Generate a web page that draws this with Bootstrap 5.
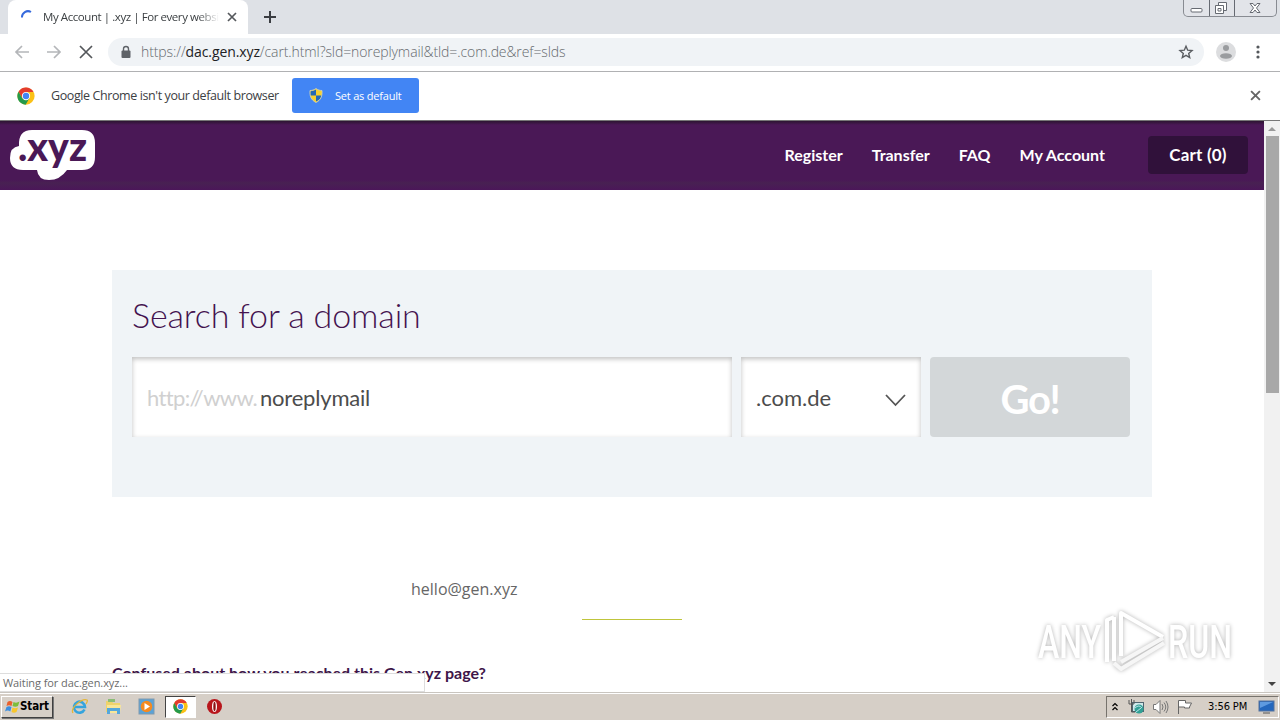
<!DOCTYPE html>
<html lang="en">
<head>
    <meta charset="UTF-8">
    <meta name="viewport" content="width=device-width, initial-scale=1.0">
    <title>My Account | .xyz | For every website</title>
    <link href="https://cdn.jsdelivr.net/npm/bootstrap@5.3.0/dist/css/bootstrap.min.css" rel="stylesheet">

    <style>
        body { width: 1280px; height: 720px; font-family: "Open Sans", sans-serif; font-size: 12px; line-height: 1; color: #3c4043; background: #fff; }
        svg { display: block; flex: none; }
        span, a { white-space: nowrap; }

        /* browser window */
        .tabstrip { height: 34px; background: #dee1e6; }
        .tab-active { width: 240px; height: 34px; margin-left: 8px; padding: 0 10px 0 12px; background: #fff; border-radius: 8px 8px 0 0; }
        .tab-title { width: 176px; margin-left: 8px; line-height: 18px; font-size: 11.5px; letter-spacing: -.43px; -webkit-mask-image: linear-gradient(90deg, #000 88%, transparent); }
        .winbtns { width: 94px; height: 17px; margin-right: 3px; border: 1px solid #888b92; border-top: 0; border-radius: 0 0 5px 5px; background: #e2e4e9; }
        .toolbar { height: 38px; padding-bottom: 1px; border-bottom: 1px solid #b0b1b3; }
        .omnibox { width: 1096px; height: 28px; margin-left: 14px; padding: 0 10px 0 12px; background: #f0f3f6; }
        .url { margin-left: 9px; font-size: 14px; font-weight: 300; color: #666a6e; line-height: 20px; letter-spacing: -.1px; }
        .url b { font-weight: 400; color: #202124; }
        .infobar { height: 49px; padding-bottom: 1px; border-bottom: 1px solid #777; }
        .infobar-text { width: 241px; margin-left: 17px; font-size: 12.5px; line-height: 20px; letter-spacing: -.4px; }
        .btn-default-browser { width: 127px; height: 35px; padding: 0 0 0 17px; background: #4285f4; border-radius: 3px; color: #fff; font-size: 11px; line-height: 1; letter-spacing: -.2px; }

        /* page */
        .viewport { height: 571px; }
        .site { width: 1264px; overflow: hidden; font-family: Lato, sans-serif; }
        .site-nav { height: 69px; padding: 0 16px 2px 10px; background: linear-gradient(#2c1531, #4a1856 4px, #4a1856 59px, #482152 62px, #4b1659); }
        .site-nav a { color: #fff; text-decoration: none; font-size: 16px; font-weight: 700; line-height: 20px; }
        .site-nav .cart-btn { width: 100px; height: 38px; margin-left: 43px; background: #30113a; border-radius: 4px; font-size: 17px; letter-spacing: .2px; }
        .search-panel { width: 1040px; height: 227px; margin: 80px 0 0 112px; padding: 23px 20px 0; background: #f0f4f7; }
        .search-title { height: 44px; margin: 0 0 20px; font-size: 34px; font-weight: 300; line-height: 44px; letter-spacing: -.13px; color: #44134f; }
        .field { height: 80px; padding: 2px 15px 0; background: #fff; box-shadow: inset 0 2px 5px rgba(0,0,0,.25); font-size: 22px; line-height: 30px; color: #4c4c4c; }
        .field-name { width: 600px; }
        .field-tld { width: 180px; }
        .http { width: 113px; letter-spacing: -.65px; color: #d0d0d0; }
        .domain-name { letter-spacing: -.2px; }
        .btn-go { width: 200px; height: 80px; background: #d3d7d9; color: #fff; border-radius: 4px; font-size: 40px; font-weight: 700; line-height: 1; letter-spacing: -1.4px; }
        .mail { margin: 81px 0 0 411px; font-family: "Open Sans", sans-serif; font-size: 16px; line-height: 22px; color: #666; }
        .rule { width: 100px; height: 1px; margin: 19px 0 0 582px; background: #bfc53c; }
        .question { margin: 41px 0 0 112px; font-size: 16px; font-weight: 700; line-height: 24px; color: #3e1549; }
        .scroll-y { width: 16px; background: #f1f1f1; }
        .scroll-thumb { width: 13px; height: 257px; background: #a8a8a8; }
        .status { left: 0; top: 673px; width: 425px; height: 19px; padding: 0 3px; background: #fff; border: 1px solid #ddd; border-left: 0; font-size: 11px; line-height: 18px; letter-spacing: -.08px; color: #6b6b6b; }
        .watermark { left: 1030px; top: 600px; filter: drop-shadow(0 0 2px rgba(0,0,0,.3)); }

        /* taskbar */
        .taskbar { height: 28px; background: #d6cfc7; border-top: 1px solid #c9c5bf; box-shadow: inset 0 1px #fff; font-family: "DejaVu Sans Condensed", "DejaVu Sans", sans-serif; color: #000; }
        .start-btn { width: 52px; height: 22px; margin-left: 1px; padding-left: 2px; border: 1px solid; border-color: #fff #404040 #404040 #fff; box-shadow: 1px 1px #777; font-weight: 700; font-size: 11.5px; letter-spacing: -.1px; }
        .task-open { width: 31px; height: 22px; background: #fff; border: 1px solid; border-color: #444 #fff #fff #444; }
        .tray { width: 173px; height: 22px; margin-right: 1px; border: 1px solid; border-color: #77736d #fff #fff #77736d; font-size: 11px; padding-left: 4px; }
        .clock { width: 41px; letter-spacing: -.1px; }
    </style>
</head>
<body class="overflow-hidden position-relative">

<svg width="0" height="0" class="position-absolute">
    <symbol id="chrome" viewBox="0 0 48 48">
        <circle cx="24" cy="24" r="23" fill="#fbc116"/>
        <path d="M4 12.5A23 23 0 0 1 44 13H24L14 30z" fill="#e33b2e"/>
        <path d="M4 12.5A23 23 0 0 0 23 47L33 30 24 35 14 30z" fill="#249a4b"/>
        <circle cx="24" cy="24" r="11" fill="#fff"/><circle cx="24" cy="24" r="8.5" fill="#4285f4"/>
    </symbol>
    <symbol id="cross" viewBox="0 0 10 10"><path d="M1 1l8 8M9 1L1 9" stroke="currentColor" stroke-width="1.7" fill="none"/></symbol>
</svg>

<div class="tabstrip d-flex">
    <div class="tab-active d-flex align-items-center">
        <svg width="15" height="15" viewBox="0 0 15 15"><path d="M2 7.500a6 6 0 0 1 9-5.500" stroke="#3569dc" stroke-width="2" fill="none"/></svg>
        <span class="tab-title">My Account | .xyz | For every websi</span>
        <svg class="ms-2" width="10" height="10" style="color:#55585c"><use href="#cross"/></svg>
    </div>
    <svg class="mt-2 ms-3" width="14" height="16" viewBox="0 0 14 16"><path d="M0 9h12M6 3v12" stroke="#3a3d42" stroke-width="2"/></svg>
    <div class="winbtns ms-auto">
        <svg width="92" height="16" viewBox="0 0 92 16" fill="none" stroke="#666a72">
            <path d="M25.500 0v16M50.500 0v16"/>
            <rect x="7" y="8.500" width="11" height="3.500" rx="1" fill="#fff"/>
            <path d="M34.500 5V2.500h8v8H40M31.500 5.500h8v8h-8zM34 8.500h3v2.500h-3z" fill="#fff"/>
            <path d="M66 3.500h3l2 2.500 2-2.500h3l-3.500 4.500 3.500 4.500h-3l-2-2.500-2 2.500h-3L69.500 8z" fill="#fff"/>
        </svg>
    </div>
</div>

<div class="toolbar d-flex align-items-center">
    <svg width="80" height="16" viewBox="0 0 80 16" fill="none" stroke="#b4b6b9" stroke-width="1.700" style="margin-left:14px">
        <path d="M15 8H2M8 2L2 8l6 6M33 8h13M40 2l6 6-6 6"/><path d="M66 2l12 12M78 2L66 14" stroke="#54575b"/>
    </svg>
    <div class="omnibox d-flex align-items-center rounded-pill">
        <svg width="12" height="14" viewBox="0 0 12 14"><path d="M3.500 6V4a2.500 2.500 0 0 1 5 0v2" fill="none" stroke="#5f6368" stroke-width="1.400"/><rect x="1.500" y="5.500" width="9" height="7.500" rx="1" fill="#5f6368"/></svg>
        <span class="url">https://<b>dac.gen.xyz</b>/cart.html?sld=noreplymail&amp;tld=.com.de&amp;ref=slds</span>
        <svg class="ms-auto" width="16" height="16" viewBox="0 0 16 16"><path d="M8 2.200l1.700 4 4.300.4-3.300 2.800 1 4.200L8 11.400l-3.700 2.200 1-4.200L2 6.600l4.300-.4z" fill="none" stroke="#5a5d61" stroke-width="1.400"/></svg>
    </div>
    <svg width="20" height="20" viewBox="0 0 20 20" style="margin-left:12px"><circle cx="10" cy="10" r="10" fill="#dcdddf"/><circle cx="10" cy="6" r="3" fill="#9a9c9f"/><ellipse cx="10" cy="14" rx="6" ry="2.800" fill="#9a9c9f"/></svg>
    <svg width="4" height="14" viewBox="0 0 4 14" fill="#55585c" style="margin-left:20px"><circle cx="2" cy="2" r="1.600"/><circle cx="2" cy="7" r="1.600"/><circle cx="2" cy="12" r="1.600"/></svg>
</div>

<div class="infobar d-flex align-items-center">
    <svg width="18" height="18" style="margin-left:17px"><use href="#chrome"/></svg>
    <span class="infobar-text" style="margin-left:16px">Google Chrome isn't your default browser</span>
    <button class="btn btn-default-browser d-flex align-items-center border-0">
        <svg width="14" height="15" viewBox="0 0 14 15"><path d="M7 .5C5 2 3 2.500 1 2.500 .5 8 2 12 7 14.500 12 12 13.500 8 13 2.500 11 2.500 9 2 7 .5z" fill="#f7d12f"/><path d="M7 1.500v6H1.500C1.300 6 1.300 4.500 1.500 3.200 3.500 3 5 2.500 7 1.500zM7 7.500h5.500C12 10 10.500 12 7 13.500z" fill="#2469b5"/><path d="M7 .5C5 2 3 2.500 1 2.500 .5 8 2 12 7 14.500 12 12 13.500 8 13 2.500 11 2.500 9 2 7 .5z" fill="none" stroke="#cdd3c0" stroke-width=".8"/></svg>
        <span style="margin-left:12px">Set as default</span>
    </button>
    <svg class="ms-auto" width="11" height="11" style="margin-right:19px;color:#666"><use href="#cross"/></svg>
</div>

<div class="viewport d-flex">
    <main class="site">
        <nav class="site-nav d-flex align-items-center">
            <svg width="86" height="52" viewBox="0 0 86 52">
                <path d="M22 1H72Q85 1 85 14V28Q85 41 72 41H57Q50 51 39 51Q28 51 27 41H13Q0 41 0 29Q0 18 9 17Q8 1 22 1z" fill="#fff"/>
                <text x="8" y="32" font-family="Lato" font-weight="900" font-size="39" textLength="69" lengthAdjust="spacingAndGlyphs" fill="#4a1856">.xyz</text>
            </svg>
            <a href="#" class="ms-auto">Register</a>
            <a href="#" style="margin-left:29px">Transfer</a>
            <a href="#" style="margin-left:29px">FAQ</a>
            <a href="#" style="margin-left:29px">My Account</a>
            <a href="#" class="cart-btn d-flex align-items-center justify-content-center">Cart (0)</a>
        </nav>

        <section class="search-panel">
            <h1 class="search-title">Search for a domain</h1>
            <div class="d-flex">
                <div class="field field-name d-flex align-items-center">
                    <span class="http">http://www.</span>
                    <span class="domain-name">noreplymail</span>
                </div>
                <div class="field field-tld d-flex align-items-center justify-content-between" style="margin:0 9px">
                    <span class="tld">.com.de</span>
                    <svg class="mt-1" width="21" height="14" viewBox="0 0 21 14"><path d="M1 2l9.500 10L20 2" fill="none" stroke="#555" stroke-width="1.800"/></svg>
                </div>
                <button class="btn btn-go px-0 pt-1 pb-0 border-0">Go!</button>
            </div>
        </section>

        <div class="mail"><span>hello@gen.xyz</span></div>
        <div class="rule"></div>
        <div class="question"><span>Confused about how you reached this Gen.xyz page?</span></div>
    </main>
    <div class="scroll-y d-flex flex-column align-items-center">
        <svg width="16" height="15"><path d="M4 10h8L8 6z" fill="#999"/></svg>
        <div class="scroll-thumb"></div>
        <svg class="mt-auto" width="16" height="16"><path d="M4 6h8l-4 4z" fill="#444"/></svg>
    </div>
</div>

<div class="taskbar d-flex align-items-center">
    <div class="start-btn d-flex align-items-center">
        <svg width="16" height="16" viewBox="0 0 15 16"><path d="M3 3q2.500-2 5 0L7 7Q4.500 5.500 2 7z" fill="#e9602d"/><path d="M9 3q3 1.500 6-.5L13.500 7Q11 8.500 8 7z" fill="#7cbd3b"/><path d="M2 8q2.500-1.500 5 0l-1.200 4.500q-2.500-2-5.300 0z" fill="#3b8ee0"/><path d="M8 8.500q2.500 1.500 5.500 0L12 13q-2.500 1.500-5 0z" fill="#f8c62c"/></svg>
        <span>Start</span>
    </div>
    <svg style="margin-left:18px" width="17" height="17" viewBox="0 0 17 17" fill="none"><path d="M13.500 11.500A5.500 5.500 0 1 1 14 9H4" stroke="#35a4dd" stroke-width="2.600"/><path d="M2 15C-1 10 11 0 16 2q1 1-1 4" stroke="#e5b635" stroke-width="1.300"/></svg>
    <svg style="margin-left:17px" width="17" height="17" viewBox="0 0 17 17"><path d="M1 3h6l1 2h7v9H1z" fill="#efd36c"/><path d="M3 1h7v3H3z" fill="#8bbd76"/><path d="M2 7h14l-1 8H2z" fill="#f8e698"/><path d="M2 16v-6h13v6h-3v-3H5v3z" fill="#55a7dc"/></svg>
    <svg style="margin-left:16px" width="17" height="17" viewBox="0 0 17 17"><rect x="1" y="1" width="15" height="15" fill="#59a3d8" stroke="#8099ad"/><circle cx="8.500" cy="8.500" r="5.800" fill="#f48a20"/><path d="M6.500 5v7l5.500-3.500z" fill="#fff"/></svg>
    <div class="task-open d-flex align-items-center justify-content-center" style="margin-left:10px"><svg width="15" height="15"><use href="#chrome"/></svg></div>
    <svg style="margin-left:10px" width="17" height="17" viewBox="0 0 17 17"><circle cx="8.500" cy="8.500" r="7.500" fill="#b8161c"/><ellipse cx="8.500" cy="8.500" rx="2.500" ry="5.500" fill="#fff"/><ellipse cx="8.500" cy="8.500" rx="1.200" ry="4.800" fill="#8d1014"/></svg>
    <div class="tray ms-auto d-flex align-items-center">
        <svg width="8" height="12" viewBox="0 0 8 12" fill="none" stroke="#000" stroke-width="1.200"><path d="M1.500 5L4 2.500 6.500 5M1.500 9L4 6.500 6.500 9"/></svg>
        <svg style="margin-left:9px" width="17" height="16" viewBox="0 0 17 16"><rect x="4.500" y="3.500" width="11" height="9" fill="#cfe9ea" stroke="#4f6570"/><circle cx="11" cy="10" r="4.500" fill="#31a095"/><path d="M7 9q4-4 7 0M8 13l5-4" stroke="#b9e2e8" fill="none"/><path d="M1 1v4h5V1M3.500 0v13H7" stroke="#555" fill="none"/></svg>
        <svg style="margin-left:7px" width="17" height="16" viewBox="0 0 17 16" fill="none" stroke="#777"><path d="M1.500 5.500H4l4-4v13l-4-4H1.500z" fill="#fff"/><path d="M10 5q2 3 0 6M12 3.500q3.500 4.500 0 9M14 2q4 6 0 12"/></svg>
        <svg style="margin-left:7px" width="17" height="16" viewBox="0 0 17 16"><path d="M2.500 15V1.500h7V4h6l-2 4 0 1h-5V8h-6" fill="#fff" stroke="#666"/></svg>
        <span class="clock" style="margin-left:15px">3:56 PM</span>
        <svg style="margin-left:9px" width="17" height="14" viewBox="0 0 17 14"><rect x="1" y="1" width="15" height="10" fill="#2467bd" stroke="#55729c"/><path d="M2 2h13L2 8z" fill="#5e9ae0"/><path d="M5 13h7" stroke="#555"/></svg>
    </div>
</div>

<div class="status position-absolute">Waiting for dac.gen.xyz...</div>

<svg class="watermark position-absolute" width="210" height="80" viewBox="0 0 210 80">
    <g fill="#fff" font-family="Roboto" font-size="46" font-weight="500">
        <text x="8" y="58" textLength="63" lengthAdjust="spacingAndGlyphs">ANY</text>
        <text x="138" y="58" textLength="64" lengthAdjust="spacingAndGlyphs">RUN</text>
    </g>
    <g fill="none" stroke="#fff" stroke-width="4" stroke-linejoin="round">
        <path d="M77 62V20l7-3"/>
        <path d="M84 61V17"/>
        <path d="M91 56V13l42 24"/>
        <path d="M91 56l42-24" transform="translate(0 6)" stroke="#f6f6f6"/>
        <path d="M84 63l7 6 43-26" stroke="#f6f6f6"/>
    </g>
</svg>

<script src="https://cdn.jsdelivr.net/npm/bootstrap@5.3.0/dist/js/bootstrap.bundle.min.js"></script>
</body>
</html>
